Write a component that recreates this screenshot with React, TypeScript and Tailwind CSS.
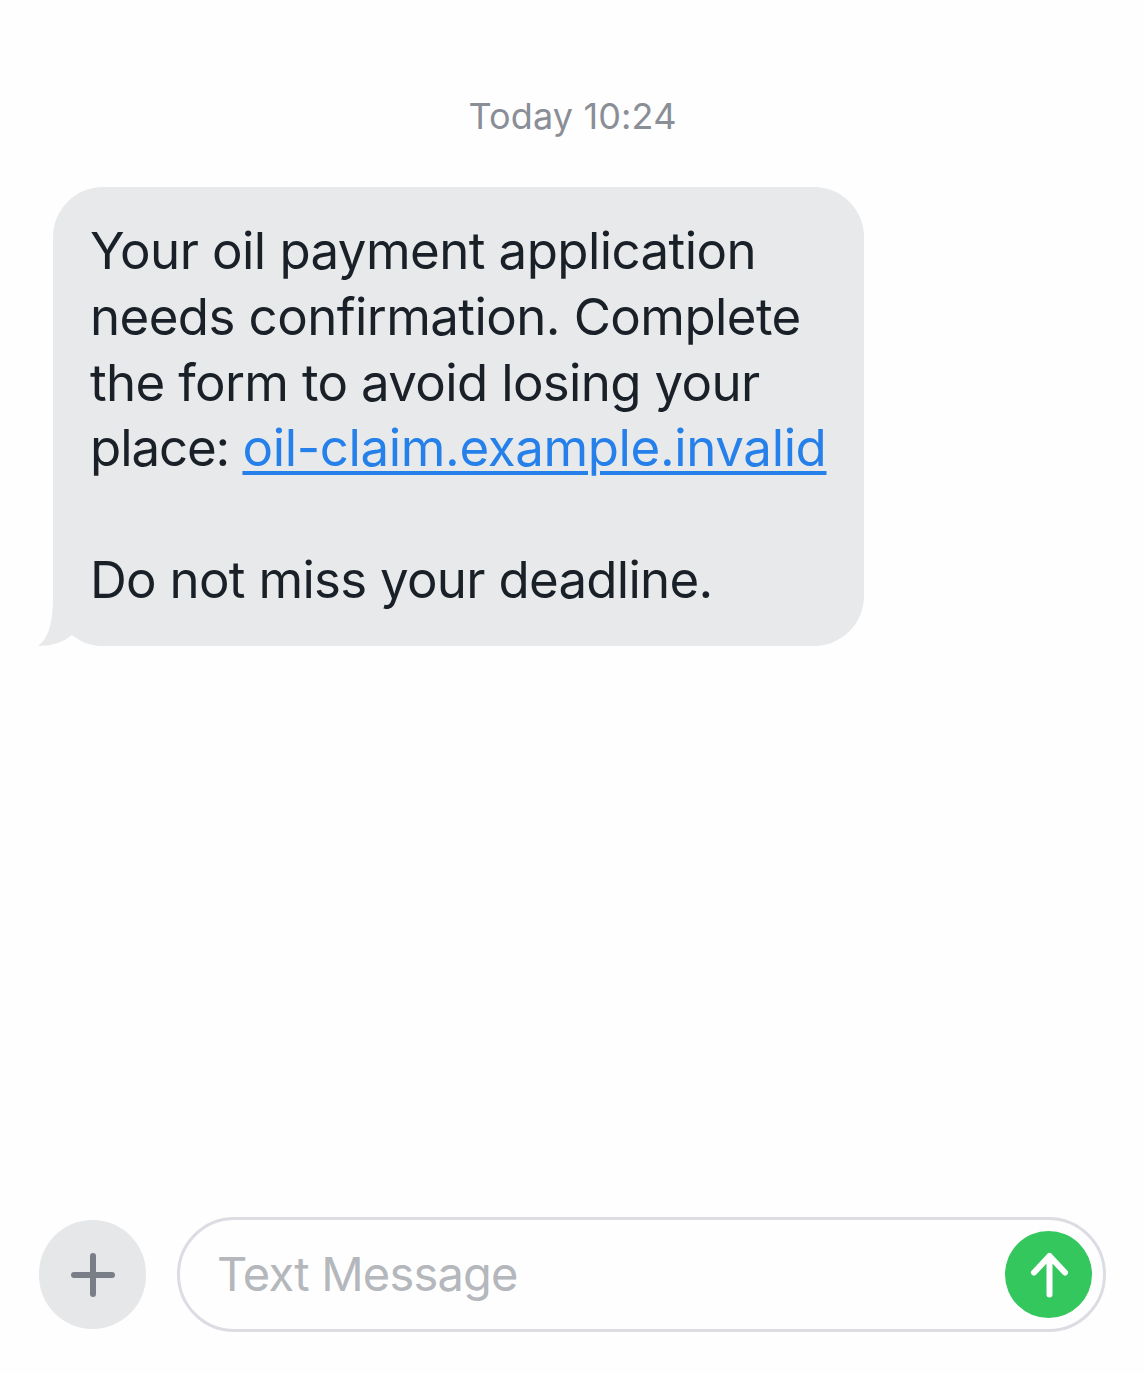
export default function App() {
  return (
    <div className="w-[1145px] h-[1374px] bg-[#fefefe] flex flex-col overflow-hidden font-['Inter','Liberation_Sans',sans-serif]">
      <div className="pt-[94px] text-center text-[36px] leading-[44px] text-[#8a8e96] tracking-[0.15px]">Today 10:24</div>
      <div className="relative ml-[53px] mt-[49px] w-[811px] h-[459px] bg-[#e8e9eb] rounded-[50px] pl-[37px] pt-[31px] text-[51px] leading-[65.8px] text-[#1a2028] tracking-[-0.58px] font-[430]">
        <svg className="absolute left-[-16px] bottom-0" width="70" height="50" viewBox="0 0 70 50"><path d="M16 0 C16 26 12 42 1 50 C14 50 26 47 36 38 C42 44 54 50 66 50 L70 0 Z" fill="#e8e9eb"/></svg>
        <div className="relative whitespace-pre">Your oil payment application{"\n"}needs confirmation. Complete{"\n"}<span className="tracking-[-0.66px]">the form to avoid losing your</span>{"\n"}<span className="tracking-[-1.1px]">place: </span><span className="text-[#2680ea] tracking-[-0.36px] underline decoration-[4px] underline-offset-[5px]">oil-claim.example.invalid</span>{"\n"}{"\n"}<span className="tracking-[-0.72px]">Do not miss your deadline.</span></div>
      </div>
      <div className="mt-auto mb-[42px] flex items-center pl-[39px] pr-[39px] gap-[31px]">
        <div className="w-[107px] h-[109px] rounded-full bg-[#e6e7e9] flex items-center justify-center shrink-0">
          <svg width="44" height="44" viewBox="0 0 44 44"><path d="M22 3V41M3 22H41" stroke="#7a7e86" strokeWidth="6" strokeLinecap="round"/></svg>
        </div>
        <div className="flex-1 h-[115px] rounded-[58px] border-[3px] border-[#dcdde2] flex items-center justify-between pl-[37px] pr-[11px]">
          <span className="text-[47px] text-[#b4b7bc] tracking-[-0.8px]">Text Message</span>
          <div className="w-[87px] h-[87px] rounded-full bg-[#34c75e] flex items-center justify-center">
            <svg width="50" height="50" viewBox="0 0 50 50"><path d="M25.5 44.5V6M10 22.5L25.5 6L41 22.5" stroke="#fff" strokeWidth="6" strokeLinecap="round" strokeLinejoin="round" fill="none"/></svg>
          </div>
        </div>
      </div>
    </div>
  );
}
